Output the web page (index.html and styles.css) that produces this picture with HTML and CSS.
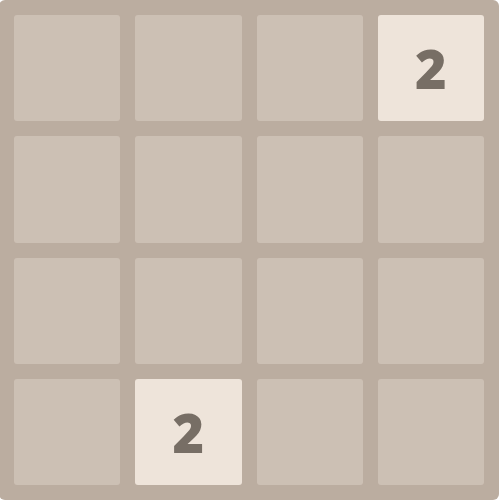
FILE: index.html
```html
<!DOCTYPE html>
<html>
<head>
  <meta charset="UTF-8">
  <title>2048</title>
  <link rel="stylesheet" href="styles.css">
</head>
<body>
  <div class="game-container">
    <div class="grid">
      <div class="cell"></div>
      <div class="cell"></div>
      <div class="cell"></div>
      <div class="cell tile tile-2">2</div>

      <div class="cell"></div>
      <div class="cell"></div>
      <div class="cell"></div>
      <div class="cell"></div>

      <div class="cell"></div>
      <div class="cell"></div>
      <div class="cell"></div>
      <div class="cell"></div>

      <div class="cell"></div>
      <div class="cell tile tile-2">2</div>
      <div class="cell"></div>
      <div class="cell"></div>
    </div>
  </div>
</body>
</html>
```

FILE: styles.css
```css
* {
  margin: 0;
  padding: 0;
  box-sizing: border-box;
}

body {
  background: #ffffff;
  font-family: "Open Sans", "DejaVu Sans", sans-serif;
  overflow: hidden;
}

.game-container {
  width: 500px;
  height: 500px;
  margin-left: -1px;
  padding: 15px;
  background: #bbada0;
  border-radius: 6px;
}

.grid {
  display: grid;
  grid-template-columns: repeat(4, 1fr);
  grid-template-rows: repeat(4, 1fr);
  gap: 15px;
  height: 100%;
}

.cell {
  background: rgba(238, 228, 218, 0.35);
  border-radius: 3px;
}

.tile {
  display: flex;
  align-items: center;
  justify-content: center;
  font-weight: 800;
  font-size: 54px;
  line-height: 1;
}

.tile-2 {
  background: #eee4da;
  color: #776e65;
}
```
